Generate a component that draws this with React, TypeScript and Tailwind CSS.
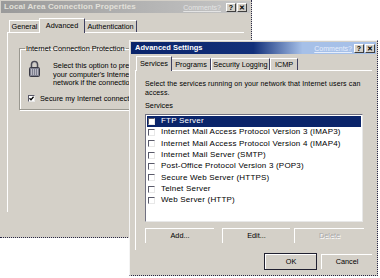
const font = "font-['Liberation_Sans',Arial,sans-serif]";

function CapButton({ children }: { children: string }) {
  return (
    <div className="w-[10px] h-[9px] bg-[#d4d0c8] border-t border-l border-white border-r border-b border-r-[#404040] border-b-[#404040] flex items-center justify-center text-[7px] font-bold leading-none text-black">
      {children}
    </div>
  );
}

function Tab({ label, active, w }: { label: string; active?: boolean; w: string }) {
  return (
    <div
      className={`${w} flex items-center justify-center bg-[#d4d0c8] border-t border-l border-white border-r border-r-[#404060] ${
        active ? "relative z-10 -mb-px h-[15px] -mx-[1px]" : "h-[12px]"
      }`}
    >
      <span className={`text-[7.3px] leading-none ${active ? "-mt-[1px]" : ""}`}>{label}</span>
    </div>
  );
}

function CheckBox({ checked }: { checked?: boolean }) {
  return (
    <div className="w-[7px] h-[7px] shrink-0 bg-white border-t border-l border-[#5a5a6a] border-r border-b border-r-[#e8e8e8] border-b-[#e8e8e8] flex items-center justify-center">
      {checked && (
        <svg width="5" height="5" viewBox="0 0 5 5">
          <path d="M0.5 2.3 L2 3.8 L4.6 0.8" stroke="#000" strokeWidth="1.3" fill="none" />
        </svg>
      )}
    </div>
  );
}

function Button({ label, w, disabled, def }: { label: string; w: string; disabled?: boolean; def?: boolean }) {
  return (
    <div
      className={`${w} h-[15px] bg-[#d4d0c8] flex items-center justify-center text-[7.3px] leading-none ${
        def ? "outline outline-1 outline-[#202030]" : ""
      } border-t border-l border-white [border-style:solid_dotted_dotted_solid] border-r-[#303050] border-b-[#303050] ${
        disabled ? "text-[#a8a8a8] [text-shadow:1px_1px_0_#fff]" : "text-black"
      }`}
    >
      {label}
    </div>
  );
}

function Lock() {
  return (
    <svg width="11" height="17" viewBox="0 0 11 17">
      <path d="M2.5 8 V4.5 a3 3 0 0 1 6 0 V8" stroke="#4a4a55" strokeWidth="1.6" fill="none" />
      <path d="M3.6 8 V4.6 a1.9 1.9 0 0 1 3.8 0 V8" stroke="#b8b8c0" strokeWidth="0.6" fill="none" />
      <rect x="0.5" y="7.5" width="10" height="9" rx="1" fill="#7e8090" stroke="#3a3a44" />
      <path d="M2.5 9 V15 M4.5 9 V15 M6.5 9 V15 M8.5 9 V15" stroke="#c8c8d0" strokeWidth="0.8" />
    </svg>
  );
}

const services = [
  "FTP Server",
  "Internet Mail Access Protocol Version 3 (IMAP3)",
  "Internet Mail Access Protocol Version 4 (IMAP4)",
  "Internet Mail Server (SMTP)",
  "Post-Office Protocol Version 3 (POP3)",
  "Secure Web Server (HTTPS)",
  "Telnet Server",
  "Web Server (HTTP)",
];

export default function App() {
  return (
    <div className={`relative w-[380px] h-[278px] bg-white overflow-hidden text-black ${font}`}>
      {/* back window */}
      <div className="absolute left-0 top-0 w-[252px] h-[238px] bg-[#d4d0c8] border-r border-b border-dotted border-[#2a2a48] flex flex-col">
        <div className="mx-[1px] mt-[1px] h-[12px] flex items-center gap-[1px] pr-[3px] bg-[linear-gradient(90deg,#9a9a9a,#c6c6c6)]">
          <span className="pl-[3px] font-bold text-[8px] tracking-[0.1px] leading-none text-[#e2e0da]">
            Local Area Connection Properties
          </span>
          <span className="ml-auto mr-[4px] text-[7px] leading-none underline text-[#e4e4e4]">Comments?</span>
          <CapButton>?</CapButton>
          <CapButton>✕</CapButton>
        </div>
        <div className="px-[7px] pt-[5px] flex flex-col">
          <div className="flex items-end pl-[2px] h-[14px]">
            <Tab label="General" w="w-[31px]" />
            <Tab label="Advanced" w="w-[46px]" active />
            <Tab label="Authentication" w="w-[53px]" />
          </div>
          <div className="h-[180px] border-t border-l border-white [border-style:solid_dotted_dotted_solid] border-r-[#2a2a48] border-b-[#2a2a48] pl-[11px] pt-[12px]">
            <fieldset className="w-[230px] h-[65px] border border-[#9a9890] shadow-[1px_1px_0_#fff,inset_1px_1px_0_#fff] px-[8px]">
              <legend className="px-[1px] -ml-[3px] text-[7.3px] leading-none">Internet Connection Protection</legend>
              <div className="flex gap-[13px] pt-[8px]">
                <div className="pl-[1px]">
                  <Lock />
                </div>
                <div className="pt-[2px] text-[7.3px] leading-[8.4px]">
                  Select this option to prevent
                  <br />
                  your computer's Internet
                  <br />
                  network if the connection
                </div>
              </div>
              <div className="flex items-center gap-[5px] mt-[7px]">
                <CheckBox checked />
                <span className="text-[7.3px] leading-none">Secure my Internet connection</span>
              </div>
            </fieldset>
          </div>
        </div>
      </div>

      {/* front window */}
      <div className="absolute left-[129px] top-[40px] w-[249px] h-[236px] bg-[#d4d0c8] border border-[#f4f4f4] [border-style:solid_dotted_dotted_solid] border-r-[#2a2a48] border-b-[#2a2a48] flex flex-col">
        <div className="mx-[1px] mt-[1px] h-[12px] flex items-center gap-[1px] pr-[1px] bg-[linear-gradient(90deg,#0a246a_0%,#12307a_50%,#a6c0e8_70%,#a6c0e8_100%)]">
          <span className="pl-[4px] font-bold text-[7.5px] leading-none text-white">Advanced Settings</span>
          <span className="ml-auto mr-[1px] text-[7px] leading-none underline text-[#e6eefc]">Comments?</span>
          <CapButton>?</CapButton>
          <CapButton>✕</CapButton>
        </div>
        <div className="px-[5px] pt-[1px] flex flex-col">
          <div className="flex items-end pl-[2px] h-[15px]">
            <Tab label="Services" w="w-[36px]" active />
            <Tab label="Programs" w="w-[40px]" />
            <Tab label="Security Logging" w="w-[59px]" />
            <Tab label="ICMP" w="w-[28px]" />
          </div>
          <div className="h-[180px] border-t border-l border-white [border-style:solid_dotted_dotted_solid] border-r-[#2a2a48] border-b-[#2a2a48] pl-[9px] pt-[9px] flex flex-col">
            <div className="text-[7px] tracking-[0.12px] leading-[8.5px]">
              Select the services running on your network that Internet users can
              <br />
              access.
            </div>
            <div className="mt-[5px] text-[7.3px] leading-[8.5px]">Services</div>
            <div className="mt-[3px] w-[218px] h-[108px] bg-white border-t border-l border-[#707080] border-r border-b border-r-[#e8e8e8] border-b-[#e8e8e8] p-[1px]">
              {services.map((s, i) => (
                <div
                  key={s}
                  className={`h-[11.33px] flex items-center gap-[6px] pl-[1px] ${i === 0 ? "bg-[#0a246a] text-white" : ""}`}
                >
                  <CheckBox />
                  <span className="text-[8px] tracking-[0.2px] leading-none whitespace-nowrap">{s}</span>
                </div>
              ))}
            </div>
            <div className="mt-[6px] flex">
              <Button label="Add..." w="w-[69px]" />
              <div className="w-[8px]" />
              <Button label="Edit..." w="w-[68px]" />
              <div className="w-[4px]" />
              <Button label="Delete" w="w-[70px]" disabled />
            </div>
          </div>
          <div className="mt-[4px] flex justify-end gap-[5px]">
            <Button label="OK" w="w-[51px]" def />
            <Button label="Cancel" w="w-[51px]" />
          </div>
        </div>
      </div>
    </div>
  );
}
